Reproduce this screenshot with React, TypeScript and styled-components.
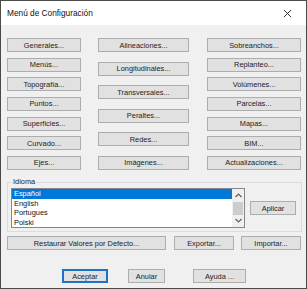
import styled, { createGlobalStyle } from 'styled-components';

const GlobalStyle = createGlobalStyle`
    html, body {
        margin: 0;
        padding: 0;
        background: #f0f0f0;
    }
    * {
        box-sizing: border-box;
    }
`

const leftColumn = ['Generales...', 'Menús...', 'Topografía...', 'Puntos...', 'Superficies...', 'Curvado...', 'Ejes...'];
const middleColumn = ['Alineaciones...', 'Longitudinales...', 'Transversales...', 'Peraltes...', 'Redes...', 'Imágenes...'];
const rightColumn = ['Sobreanchos...', 'Replanteo...', 'Volúmenes...', 'Parcelas...', 'Mapas...', 'BIM...', 'Actualizaciones...'];
const languages = ['Español', 'English', 'Portugues', 'Polski'];

export default function App() {
    return (
        <>
            <GlobalStyle />
            <Window>
                <TitleBar>
                    <Title>Menú de Configuración</Title>
                    <CloseIcon width="10" height="10" viewBox="0 0 10 10">
                        <path d="M1 1 L9 9 M9 1 L1 9" stroke="#1a1a1a" strokeWidth="1" fill="none" />
                    </CloseIcon>
                </TitleBar>
                <Body>
                    <ButtonGrid>
                        <Column $width={74}>
                            {leftColumn.map((label) => (
                                <DialogButton key={label}>{label}</DialogButton>
                            ))}
                        </Column>
                        <Column $width={91}>
                            {middleColumn.map((label) => (
                                <DialogButton key={label}>{label}</DialogButton>
                            ))}
                        </Column>
                        <Column $width={94}>
                            {rightColumn.map((label) => (
                                <DialogButton key={label}>{label}</DialogButton>
                            ))}
                        </Column>
                    </ButtonGrid>

                    <GroupBox>
                        <GroupLabel>Idioma</GroupLabel>
                        <ListBox>
                            <ListItems>
                                {languages.map((lang, index) => (
                                    <ListItem key={lang} $selected={index === 0}>{lang}</ListItem>
                                ))}
                            </ListItems>
                            <ScrollBar>
                                <ScrollArrow width="7" height="5" viewBox="0 0 7 5">
                                    <path d="M0.5 4 L3.5 1 L6.5 4" stroke="#606060" strokeWidth="1.2" fill="none" />
                                </ScrollArrow>
                                <ScrollThumb />
                                <ScrollArrow width="7" height="5" viewBox="0 0 7 5">
                                    <path d="M0.5 1 L3.5 4 L6.5 1" stroke="#606060" strokeWidth="1.2" fill="none" />
                                </ScrollArrow>
                            </ScrollBar>
                        </ListBox>
                        <DialogButton $width={46}>Aplicar</DialogButton>
                    </GroupBox>

                    <ActionRow>
                        <DialogButton $width={159}>Restaurar Valores por Defecto...</DialogButton>
                        <DialogButton $width={60}>Exportar...</DialogButton>
                        <DialogButton $width={60}>Importar...</DialogButton>
                    </ActionRow>

                    <FooterRow>
                        <DialogButton $width={46} $default>Aceptar</DialogButton>
                        <DialogButton $width={37}>Anular</DialogButton>
                        <DialogButton $width={53}>Ayuda ...</DialogButton>
                    </FooterRow>
                </Body>
            </Window>
        </>
    );
}

const Window = styled.div`
    width: 307px;
    height: 289px;
    border: 1px solid #4a4a4a;
    background: #f0f0f0;
    display: flex;
    flex-direction: column;
    font-family: "Liberation Sans", Arial, sans-serif;
    overflow: hidden;
`

const TitleBar = styled.div`
    height: 24px;
    background: #ffffff;
    display: flex;
    align-items: center;
    justify-content: space-between;
    padding: 0 14px 0 6px;
`

const Title = styled.span`
    font-size: 8.3px;
    color: #111;
`

const CloseIcon = styled.svg`
    display: block;
    width: 9px;
    height: 9px;
`

const Body = styled.div`
    flex: 1;
    display: flex;
    flex-direction: column;
    padding: 13px 4px 0 6px;
`

const ButtonGrid = styled.div`
    display: flex;
    gap: 17px;
    height: 132px;
`

const Column = styled.div<{ $width: number }>`
    width: ${(p) => p.$width}px;
    display: flex;
    flex-direction: column;
    justify-content: space-between;
    &:last-child {
        margin-left: 1px;
    }
`

const DialogButton = styled.button<{ $width?: number; $default?: boolean }>`
    width: ${(p) => (p.$width ? `${p.$width}px` : '100%')};
    height: 14px;
    padding: 0;
    margin: 0;
    background: #e1e1e1;
    border: ${(p) => (p.$default ? '2px solid #1c72c4' : '1px solid #adadad')};
    font-family: "Liberation Sans", Arial, sans-serif;
    font-size: 7.4px;
    color: #222;
    display: flex;
    align-items: center;
    justify-content: center;
    white-space: nowrap;
`

const GroupBox = styled.div`
    position: relative;
    margin-top: 12px;
    height: 50px;
    border: 1px solid #dcdcdc;
    display: flex;
    align-items: flex-start;
    padding: 5px 0 0 3px;
    gap: 5px;

    & > button {
        margin-top: 13px;
    }
`

const GroupLabel = styled.span`
    position: absolute;
    top: -6px;
    left: 4px;
    padding: 0 1px;
    background: #f0f0f0;
    font-size: 7.4px;
    color: #222;
`

const ListBox = styled.div`
    width: 234px;
    height: 40px;
    border: 1px solid #828790;
    background: #ffffff;
    display: flex;
`

const ListItems = styled.div`
    flex: 1;
    display: flex;
    flex-direction: column;
`

const ListItem = styled.div<{ $selected?: boolean }>`
    height: 9.5px;
    line-height: 9.5px;
    padding-left: 2px;
    font-size: 7.4px;
    background: ${(p) => (p.$selected ? '#0078d7' : 'transparent')};
    color: ${(p) => (p.$selected ? '#ffffff' : '#111')};
`

const ScrollBar = styled.div`
    width: 12px;
    background: #f0f0f0;
    display: flex;
    flex-direction: column;
    align-items: center;
    justify-content: space-between;
    padding: 4px 0 4px;
`

const ScrollArrow = styled.svg`
    display: block;
`

const ScrollThumb = styled.div`
    width: 10px;
    height: 13px;
    background: #cdcdcd;
`

const ActionRow = styled.div`
    display: flex;
    margin-top: 4px;
    gap: 8px;

    & > button:last-child {
        margin-left: -1px;
    }
`

const FooterRow = styled.div`
    display: flex;
    margin-top: 19px;
    padding-left: 55px;
    gap: 20px;

    & > button:last-child {
        margin-left: 8px;
    }
`
